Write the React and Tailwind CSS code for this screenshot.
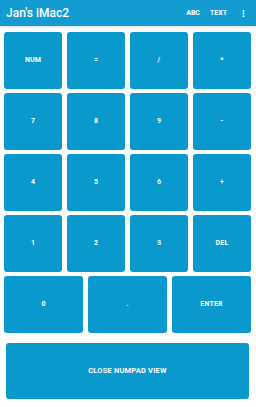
import { EllipsisVertical } from 'lucide-react';

const rows = [
  ['NUM', '=', '/', '*'],
  ['7', '8', '9', '-'],
  ['4', '5', '6', '+'],
  ['1', '2', '3', 'DEL'],
];

function Key({ label, className = '' }) {
  return (
    <button className={`h-[57px] rounded-[3px] bg-[#0a99cd] text-white text-[7px] font-bold tracking-wide flex items-center justify-center ${className}`}>
      {label}
    </button>
  );
}

export default function App() {
  return (
    <div className="w-[256px] h-[407px] bg-white font-['Roboto',sans-serif] flex flex-col">
      <div className="h-[26px] bg-[#129cd2] shadow-[0_1px_2px_rgba(0,0,0,0.15)] flex items-center pl-[6px] pr-[8px] text-white">
        <span className="text-[12px] font-medium flex-1">Jan's iMac2</span>
        <span className="text-[7px] font-bold mr-[10px]">ABC</span>
        <span className="text-[7px] font-bold mr-[12px]">TEXT</span>
        <EllipsisVertical className="w-[9px] h-[9px]" strokeWidth={3} />
      </div>

      <div className="pt-[6px] pl-[4px] pr-[5px] flex flex-col gap-[4px]">
        {rows.map((r, i) => (
          <div key={i} className="grid grid-cols-4 gap-x-[5px]">
            {r.map((k) => (
              <Key key={k} label={k} />
            ))}
          </div>
        ))}
        <div className="grid grid-cols-3 gap-x-[5px]">
          <Key label="0" />
          <Key label="." />
          <Key label="ENTER" />
        </div>
      </div>

      <div className="pt-[10px] pl-[6px] pr-[7px]">
        <button className="w-full h-[56px] rounded-[3px] bg-[#0a99cd] text-white text-[7.5px] font-bold tracking-wide flex items-center justify-center">
          CLOSE NUMPAD VIEW
        </button>
      </div>
    </div>
  );
}
